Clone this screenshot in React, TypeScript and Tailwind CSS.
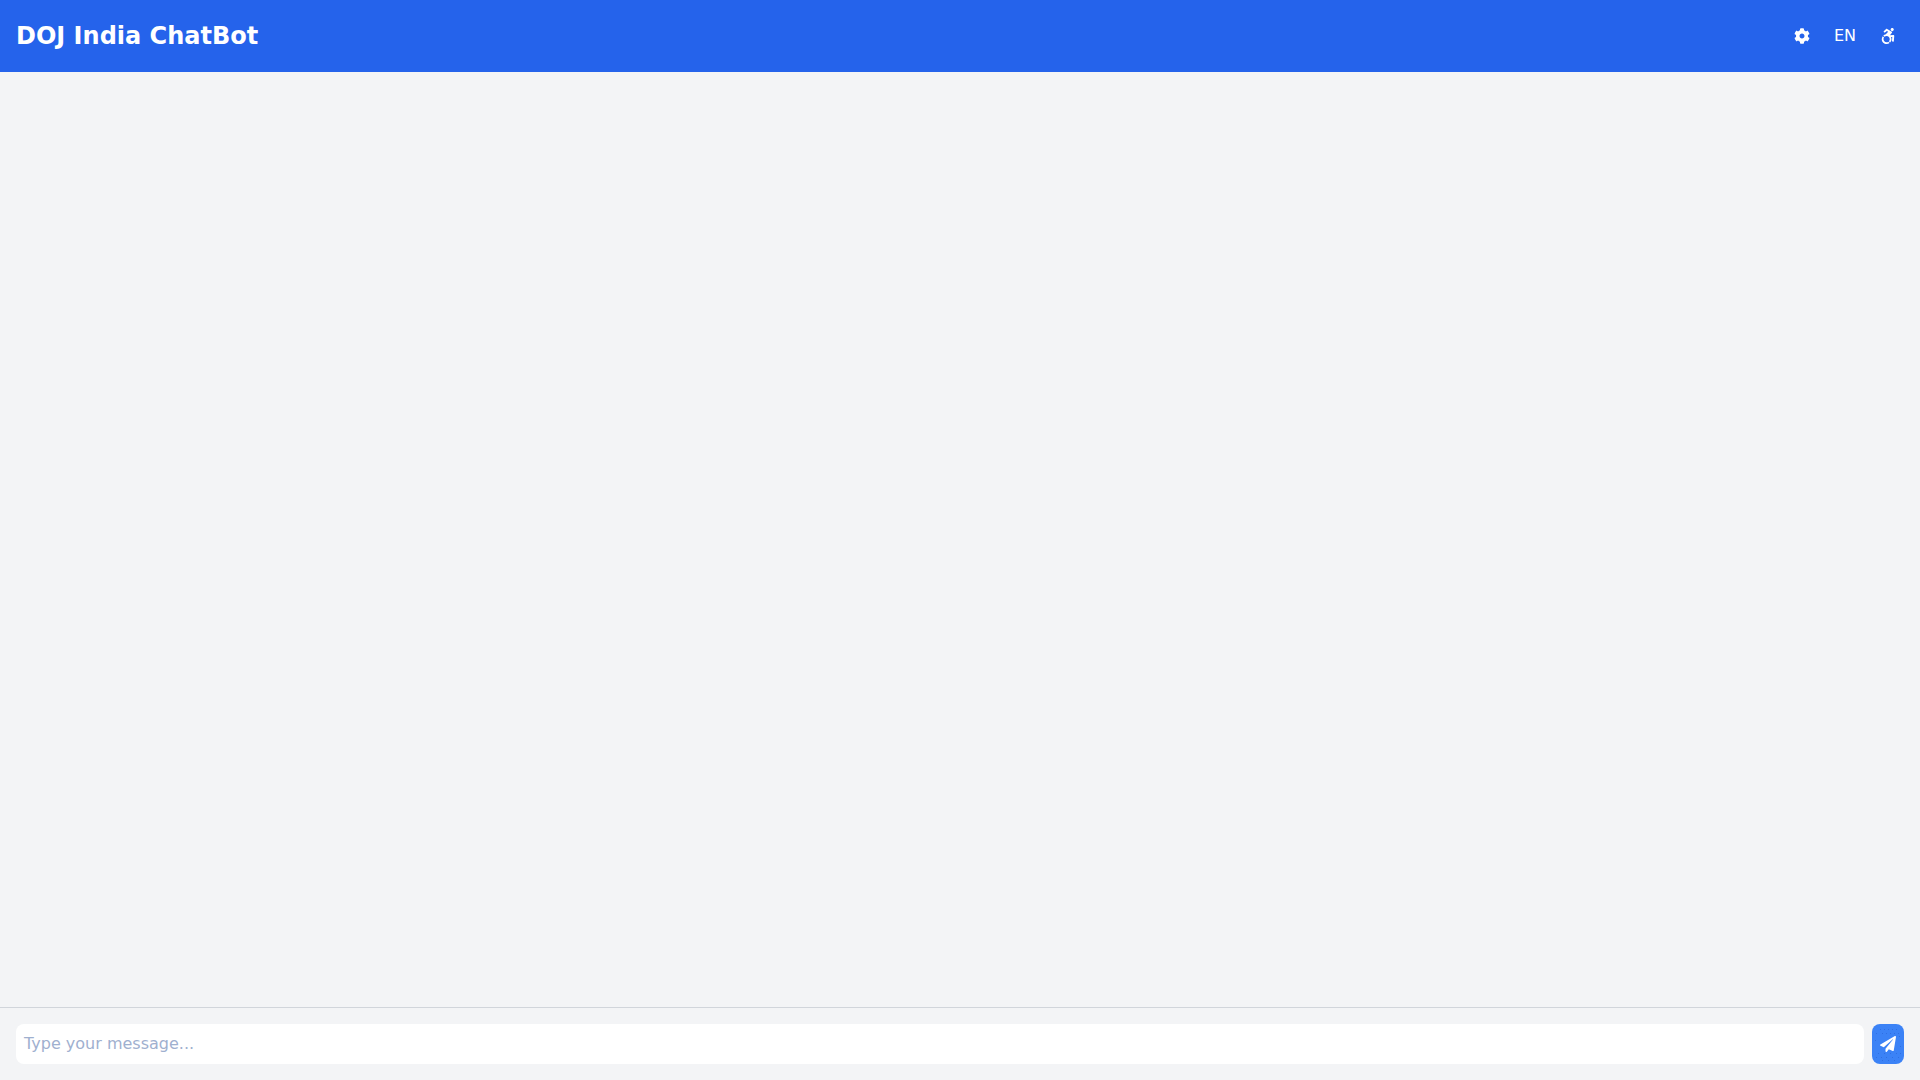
import { FaCog, FaAccessibleIcon, FaPaperPlane } from 'react-icons/fa'

// faint speckle on the send button
const dots = [
  [8, 5], [12, 5], [16, 5], [20, 5], [24, 5],
  [4, 9], [10, 9], [14, 9], [18, 9], [22, 9], [26, 9],
  [27, 12], [3, 16], [28, 22],
  [6, 29], [12, 29], [18, 29], [24, 29], [28, 29],
  [4, 33], [9, 33], [14, 33], [20, 33], [26, 33],
  [10, 36], [16, 36], [22, 36],
]

export default function App() {
  return (
    <div className="flex h-screen flex-col bg-[#f3f4f6] font-['DejaVu_Sans',sans-serif]">
      {/* Header */}
      <header className="flex items-center justify-between bg-[#2563eb] p-4 text-white">
        <h1 className="text-2xl font-bold">DOJ India ChatBot</h1>
        <div className="flex items-center gap-2">
          <button className="rounded p-2">
            <FaCog />
          </button>
          <button className="rounded p-2">EN</button>
          <button className="rounded p-2">
            <FaAccessibleIcon />
          </button>
        </div>
      </header>

      {/* Messages */}
      <main className="flex-1 overflow-y-auto p-4"></main>

      {/* Input */}
      <footer className="border-t border-[#d1d5db] p-4">
        <div className="flex gap-2">
          <textarea
            rows={1}
            placeholder="Type your message..."
            className="h-10 flex-1 resize-none rounded-lg bg-white p-2 text-base outline-none placeholder:text-[#9fb0cf]"
          />
          <button className="relative flex h-10 w-8 items-center justify-center rounded-lg bg-[#3b82f6] text-white">
            <svg className="absolute inset-0" width="32" height="40" viewBox="0 0 32 40" fill="#2f6fe3">
              {dots.map(([x, y]) => (
                <rect key={`${x}-${y}`} x={x} y={y} width="1" height="1" />
              ))}
            </svg>
            <FaPaperPlane className="relative" />
          </button>
        </div>
      </footer>
    </div>
  )
}
